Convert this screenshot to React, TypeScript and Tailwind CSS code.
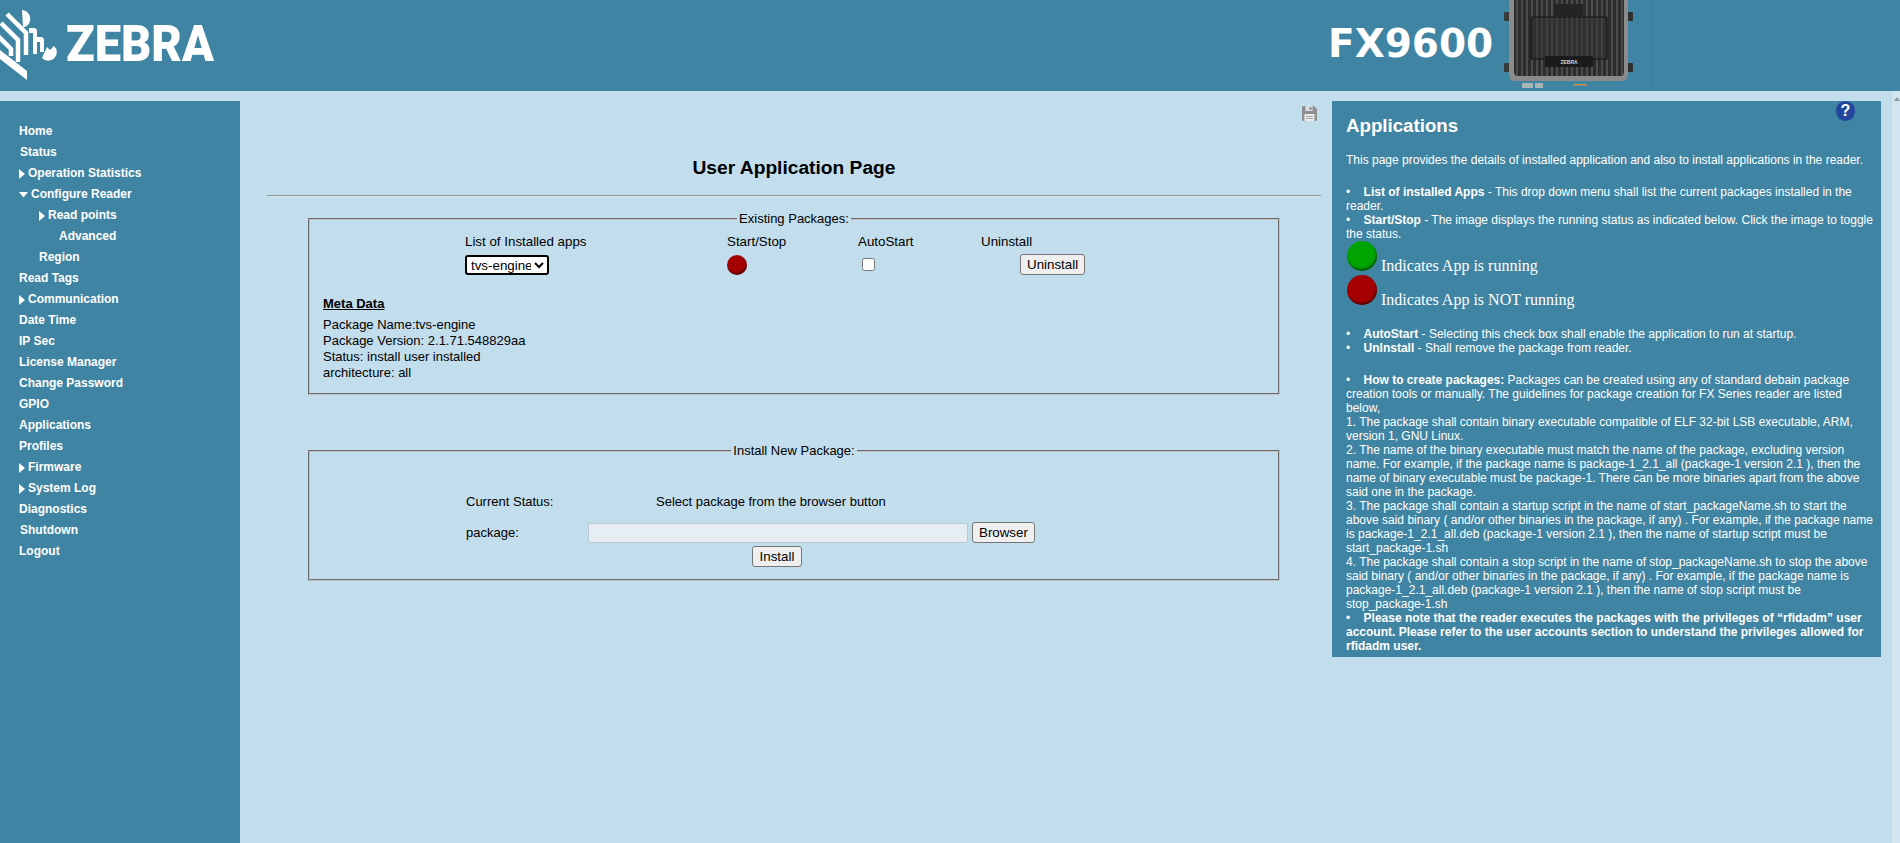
import React from "react";

const ARIAL = "font-['Liberation_Sans',Arial,sans-serif]";

function ZebraMark() {
  return (
    <svg width="62" height="84" viewBox="0 0 62 84" className="shrink-0" fill="none">
      <g stroke="#fff" strokeWidth="4.5" strokeLinejoin="miter">
        <polyline points="7,14 26,33 26,55" />
        <polyline points="1,23 18,40 18,62" />
        <polyline points="-3,35 11,49 11,56" />
      </g>
      <polygon points="0,50 27,71 27,80 0,59" fill="#fff" />
      <path d="M22 10 C29 11 31 17 30 21 C29 25 26 27 23 27 Z" fill="#fff" />
      <polygon points="29,28 35,28 37,30 37,54 33,54 33,33 29,33" fill="#fff" />
      <polygon points="37,37 42,37 44,39 44,52 40,52 40,42 37,42" fill="#fff" />
      <path d="M47 47 L50 50 L54 46 A8.5 8.5 0 1 1 42 58 Z" fill="#fff" />
    </svg>
  );
}

function ReaderPicture() {
  const ribs = Array.from({ length: 22 }, (_, i) => 12 + i * 5);
  return (
    <svg width="130" height="91" viewBox="0 0 130 91" className="shrink-0">
      <rect x="0" y="12" width="6" height="9" rx="1" fill="#3a3a3a" />
      <rect x="0" y="63" width="6" height="9" rx="1" fill="#3a3a3a" />
      <rect x="123" y="12" width="6" height="9" rx="1" fill="#2f2f2f" />
      <rect x="123" y="63" width="6" height="9" rx="1" fill="#2f2f2f" />
      <rect x="5" y="-6" width="119" height="87" rx="6" fill="#8b8b8b" />
      <rect x="10" y="-3" width="110" height="79" rx="4" fill="#2c2c2c" />
      {ribs.map((x) => (
        <rect key={x} x={x} y="0" width="2" height="76" fill="#4d4d4d" />
      ))}
      <rect x="27" y="17" width="76" height="42" rx="1" fill="#303030" stroke="#141414" strokeWidth="1.2" />
      {ribs.map((x) =>
        x > 28 && x < 101 ? <rect key={x} x={x} y="18" width="2" height="40" fill="#3f3f3f" /> : null
      )}
      <rect x="50" y="4" width="29" height="12" fill="#242424" />
      <rect x="41" y="56" width="48" height="11" rx="1" fill="#1b1b1b" />
      <text x="65" y="63.5" textAnchor="middle" fontSize="5" fontWeight="700" fill="#d8d8d8" fontFamily="'Liberation Sans',sans-serif">
        ZEBRA
      </text>
      <rect x="18" y="83" width="11" height="5" fill="#a9b4b9" />
      <rect x="31" y="83" width="8" height="5" fill="#a9b4b9" />
      <rect x="69" y="84" width="14" height="1.5" fill="#c98f4e" />
    </svg>
  );
}

function Led({ green, size }: { green?: boolean; size: "sm" | "lg" }) {
  return (
    <span
      className={`block shrink-0 rounded-full shadow-[inset_-1px_-2px_2px_rgba(0,0,0,0.45)] ${
        green ? "bg-[#00a400]" : "bg-[#a50000]"
      } ${size === "lg" ? "h-[30px] w-[30px]" : "h-[20px] w-[20px]"}`}
    />
  );
}

function Caret({ open }: { open?: boolean }) {
  return open ? (
    <svg width="9" height="6" viewBox="0 0 9 6" className="mr-[3px] shrink-0">
      <polygon points="0,0 9,0 4.5,5.5" fill="#fff" />
    </svg>
  ) : (
    <svg width="6" height="10" viewBox="0 0 6 10" className="mr-[3px] shrink-0">
      <polygon points="0,0 6,5 0,10" fill="#fff" />
    </svg>
  );
}

const NAV: { label: string; pad: string; caret?: "right" | "down" }[] = [
  { label: "Home", pad: "pl-[19px]" },
  { label: "Status", pad: "pl-[20px]" },
  { label: "Operation Statistics", pad: "pl-[19px]", caret: "right" },
  { label: "Configure Reader", pad: "pl-[19px]", caret: "down" },
  { label: "Read points", pad: "pl-[39px]", caret: "right" },
  { label: "Advanced", pad: "pl-[59px]" },
  { label: "Region", pad: "pl-[39px]" },
  { label: "Read Tags", pad: "pl-[19px]" },
  { label: "Communication", pad: "pl-[19px]", caret: "right" },
  { label: "Date Time", pad: "pl-[19px]" },
  { label: "IP Sec", pad: "pl-[19px]" },
  { label: "License Manager", pad: "pl-[19px]" },
  { label: "Change Password", pad: "pl-[19px]" },
  { label: "GPIO", pad: "pl-[19px]" },
  { label: "Applications", pad: "pl-[19px]" },
  { label: "Profiles", pad: "pl-[19px]" },
  { label: "Firmware", pad: "pl-[19px]", caret: "right" },
  { label: "System Log", pad: "pl-[19px]", caret: "right" },
  { label: "Diagnostics", pad: "pl-[19px]" },
  { label: "Shutdown", pad: "pl-[20px]" },
  { label: "Logout", pad: "pl-[19px]" },
];

const BTN =
  "h-[21px] rounded-[3px] border border-[#767676] bg-[#efefef] px-[6px] text-[13.33px] leading-[15px] text-black";
const FIELDSET =
  "ml-[41px] w-[972px] rounded-none border-2 border-[#c0c0c0] [border-style:groove] p-0";
const LEGEND = "mx-auto px-[2px] text-[13px] leading-[15px] text-black";

export default function App() {
  return (
    <div className={`h-[843px] w-[1900px] overflow-hidden bg-[#c2ddec] ${ARIAL}`}>
      <header className="flex h-[91px] bg-[#4084a3]">
        <div className="flex w-[1320px] items-start">
          <ZebraMark />
          <span className="mt-[18px] ml-[4px] origin-left scale-x-[0.94] font-['Roboto',sans-serif] text-[50px] leading-[52px] font-black text-white">
            ZEBRA
          </span>
        </div>
        <div className="flex w-[332px] items-start border-r border-[#3b7c97]">
          <span className="mt-[21px] ml-[8px] w-[176px] font-['DejaVu_Sans',sans-serif] text-[39px] leading-[46px] font-bold text-white">
            FX9600
          </span>
          <ReaderPicture />
        </div>
      </header>

      <div className="flex h-[752px]">
        <div className="flex flex-1 pt-[10px]">
          <aside className="h-[742px] w-[240px] shrink-0 bg-[#4084a3] pt-[20px]">
            <nav className="flex flex-col text-[12px] leading-[21px] font-bold text-white">
              {NAV.map((n) => (
                <div key={n.label} className={`flex h-[21px] items-center ${n.pad}`}>
                  {n.caret && <Caret open={n.caret === "down"} />}
                  <span>{n.label}</span>
                </div>
              ))}
            </nav>
          </aside>

          <main className="w-[1092px] shrink-0 pt-[5px] pr-[11px] pl-[27px] text-[13px] leading-[16px] text-black">
            <div className="flex justify-end pr-[4px]">
              <svg width="15" height="15" viewBox="0 0 15 15">
                <path d="M0 1 L1 0 H12 L15 3 V14 L14 15 H1 L0 14 Z" fill="#8f8f8f" />
                <rect x="3.5" y="0" width="7" height="5" fill="#d8dfe3" />
                <rect x="7.5" y="1" width="2" height="3" fill="#8f8f8f" />
                <rect x="2.5" y="8" width="10" height="7" fill="#e8ecee" />
                <rect x="4" y="10" width="7" height="1" fill="#a8a8a8" />
                <rect x="4" y="12" width="7" height="1" fill="#a8a8a8" />
              </svg>
            </div>
            <h1 className="mt-[36px] text-center text-[19.2px] leading-[22px] font-bold">User Application Page</h1>
            <hr className="mt-[16px] h-[2px] border-0 border-t border-t-[#8f9699] bg-[#dce8ef]" />

            <fieldset className={`${FIELDSET} mt-[14px] h-[184px]`}>
              <legend className={LEGEND}>Existing Packages:</legend>
              <div className="grid grid-cols-[262px_131px_123px_1fr] pt-[8px] pl-[155px] text-[13.33px]">
                <span>List of Installed apps</span>
                <span>Start/Stop</span>
                <span>AutoStart</span>
                <span>Uninstall</span>
                <div className="mt-[5px]">
                  <select className="h-[20px] w-[84px] rounded-[3px] border-2 border-black bg-white text-[13.33px] leading-[15px] text-black">
                    <option>tvs-engine</option>
                  </select>
                </div>
                <div className="mt-[5px]">
                  <Led size="sm" />
                </div>
                <div className="mt-[8px] pl-[4px]">
                  <input type="checkbox" className="m-0 block h-[13px] w-[13px]" />
                </div>
                <div className="mt-[4px] pl-[39px]">
                  <button className={`${BTN} w-[65px]`}>Uninstall</button>
                </div>
              </div>
              <div className="mt-[21px] pl-[13px]">
                <div className="font-bold underline">Meta Data</div>
                <div className="mt-[5px]">Package Name:tvs-engine</div>
                <div>Package Version: 2.1.71.548829aa</div>
                <div>Status: install user installed</div>
                <div>architecture: all</div>
              </div>
            </fieldset>

            <fieldset className={`${FIELDSET} mt-[48px] h-[138px]`}>
              <legend className={LEGEND}>Install New Package:</legend>
              <div className="pt-[36px] pl-[156px]">
                <div className="flex">
                  <span className="w-[190px]">Current Status:</span>
                  <span>Select package from the browser button</span>
                </div>
                <div className="mt-[12px] flex items-center">
                  <span className="w-[122px]">package:</span>
                  <div className="h-[20px] w-[380px] rounded-[2px] border border-[#b8c8d2] bg-[#e6eef4]" />
                  <button className={`${BTN} ml-[4px]`}>Browser</button>
                </div>
                <div className="mt-[3px] pl-[286px]">
                  <button className={`${BTN} w-[50px]`}>Install</button>
                </div>
              </div>
            </fieldset>
          </main>

          <section className="relative h-[556px] w-[549px] shrink-0 bg-[#4084a3] pt-[14px] pr-[3px] pl-[14px] text-[12px] leading-[14px] text-white">
            <span className="absolute top-0 right-[26px] flex h-[20px] w-[19px] items-center justify-center rounded-full bg-[#21469c] text-[16px] leading-none font-bold text-white">
              ?
            </span>
            <h2 className="text-[18.7px] leading-[22px] font-bold">Applications</h2>
            <p className="mt-[16px]">
              This page provides the details of installed application and also to install applications in the reader.
            </p>
            <p className="mt-[18px]">
              •&nbsp;&nbsp;&nbsp;&nbsp;<b>List of installed Apps</b> - This drop down menu shall list the current packages
              installed in the reader.
              <br />
              •&nbsp;&nbsp;&nbsp;&nbsp;<b>Start/Stop</b> - The image displays the running status as indicated below. Click
              the image to toggle the status.
            </p>
            <div className="font-['Liberation_Serif','Times_New_Roman',serif] text-[16px] leading-[18px]">
              <div className="flex items-end pl-[1px]">
                <Led green size="lg" />
                <span className="-mb-[4px] ml-[4px]">Indicates App is running</span>
              </div>
              <div className="mt-[4px] flex items-end pl-[1px]">
                <Led size="lg" />
                <span className="-mb-[4px] ml-[4px]">Indicates App is NOT running</span>
              </div>
            </div>
            <p className="mt-[22px]">
              •&nbsp;&nbsp;&nbsp;&nbsp;<b>AutoStart</b> - Selecting this check box shall enable the application to run at
              startup.
              <br />
              •&nbsp;&nbsp;&nbsp;&nbsp;<b>UnInstall</b> - Shall remove the package from reader.
            </p>
            <p className="mt-[18px]">
              •&nbsp;&nbsp;&nbsp;&nbsp;<b>How to create packages:</b> Packages can be created using any of standard debain
              package creation tools or manually. The guidelines for package creation for FX Series reader are listed
              below,
              <br />
              1. The package shall contain binary executable compatible of ELF 32-bit LSB executable, ARM, version 1, GNU
              Linux.
              <br />
              2. The name of the binary executable must match the name of the package, excluding version name. For
              example, if the package name is package-1_2.1_all (package-1 version 2.1 ), then the name of binary
              executable must be package-1. There can be more binaries apart from the above said one in the package.
              <br />
              3. The package shall contain a startup script in the name of start_packageName.sh to start the above said
              binary ( and/or other binaries in the package, if any) . For example, if the package name is
              package-1_2.1_all.deb (package-1 version 2.1 ), then the name of startup script must be
              start_package-1.sh
              <br />
              4. The package shall contain a stop script in the name of stop_packageName.sh to stop the above said binary
              ( and/or other binaries in the package, if any) . For example, if the package name is package-1_2.1_all.deb
              (package-1 version 2.1 ), then the name of stop script must be stop_package-1.sh
              <br />
              •&nbsp;&nbsp;&nbsp;&nbsp;
              <b>
                Please note that the reader executes the packages with the privileges of “rfidadm” user account. Please
                refer to the user accounts section to understand the privileges allowed for rfidadm user.
              </b>
            </p>
          </section>
        </div>
        <div className="relative w-[8px] shrink-0 bg-[#d3e5f0]">
          <svg width="6" height="4" viewBox="0 0 6 4" className="absolute top-[6px] left-[2px]">
            <polygon points="3,0 6,4 0,4" fill="#8a9aa3" />
          </svg>
        </div>
      </div>
    </div>
  );
}
